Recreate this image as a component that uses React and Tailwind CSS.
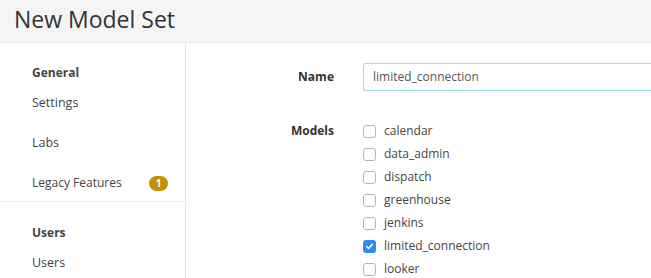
import React from 'react';

const models = [
  { name: 'calendar', checked: false },
  { name: 'data_admin', checked: false },
  { name: 'dispatch', checked: false },
  { name: 'greenhouse', checked: false },
  { name: 'jenkins', checked: false },
  { name: 'limited_connection', checked: true },
  { name: 'looker', checked: false },
];

function Checkbox({ checked }) {
  if (checked) {
    return (
      <span className="w-[13px] h-[13px] rounded-[3px] bg-[#2f8cf5] flex items-center justify-center">
        <svg width="9" height="9" viewBox="0 0 10 10">
          <path d="M2 5.2l2 2 4-4.6" fill="none" stroke="white" strokeWidth="1.8" strokeLinecap="round" strokeLinejoin="round" />
        </svg>
      </span>
    );
  }
  return <span className="w-[13px] h-[13px] rounded-[3px] border border-[#b5b5b5] bg-white" />;
}

export default function App() {
  return (
    <div className="w-[651px] h-[278px] overflow-hidden bg-white text-[#333] font-['Open_Sans',sans-serif]">
      {/* Header */}
      <div className="h-[43px] bg-[#f5f5f5] border-b border-[#e6e6e6] pl-[14px] flex items-center">
        <h1 className="text-[23px] leading-none text-[#333] -mt-[4px]">New Model Set</h1>
      </div>

      <div className="flex">
        {/* Sidebar */}
        <div className="w-[186px] shrink-0 border-r border-[#e6e6e6] h-[235px]">
          <div className="pl-[32px] pt-[21px] pr-[17px]">
            <div className="text-[12px] font-bold text-[#444] h-[18px] leading-[18px]">General</div>
            <div className="text-[12.5px] text-[#444] mt-[12px] h-[18px] leading-[18px]">Settings</div>
            <div className="text-[12.5px] text-[#444] mt-[22px] h-[18px] leading-[18px]">Labs</div>
            <div className="mt-[22px] h-[18px] flex items-center justify-between">
              <span className="text-[12px] text-[#444] leading-[18px]">Legacy Features</span>
              <span className="w-[19px] h-[15px] rounded-full bg-[#c4900b] text-white text-[10px] font-bold flex items-center justify-center leading-none">1</span>
            </div>
          </div>
          <div className="border-t border-[#ececec] mt-[9px]" />
          <div className="pl-[32px] pt-[22px]">
            <div className="text-[12px] font-bold text-[#444] h-[18px] leading-[18px]">Users</div>
            <div className="text-[12.5px] text-[#444] mt-[12px] h-[18px] leading-[18px]">Users</div>
          </div>
        </div>

        {/* Main */}
        <div className="flex-1 pt-[20px]">
          <div className="flex items-center">
            <label className="w-[148px] text-right text-[12px] font-bold text-[#333]">Name</label>
            <div className="ml-[29px] flex-1 h-[28px] border border-[#9ddbe6] rounded-l-[3px] border-r-0 flex items-center pl-[9px] text-[12px] text-[#555]">
              limited_connection
            </div>
          </div>

          <div className="flex mt-[31px]">
            <label className="w-[148px] text-right text-[12px] font-bold text-[#333] leading-[18px]">Models</label>
            <div className="ml-[29px] flex flex-col gap-[5px]">
              {models.map((m) => (
                <div key={m.name} className="flex items-center h-[18px]">
                  <Checkbox checked={m.checked} />
                  <span className="ml-[8px] text-[12px] text-[#444] leading-[18px]">{m.name}</span>
                </div>
              ))}
            </div>
          </div>
        </div>
      </div>
    </div>
  );
}
